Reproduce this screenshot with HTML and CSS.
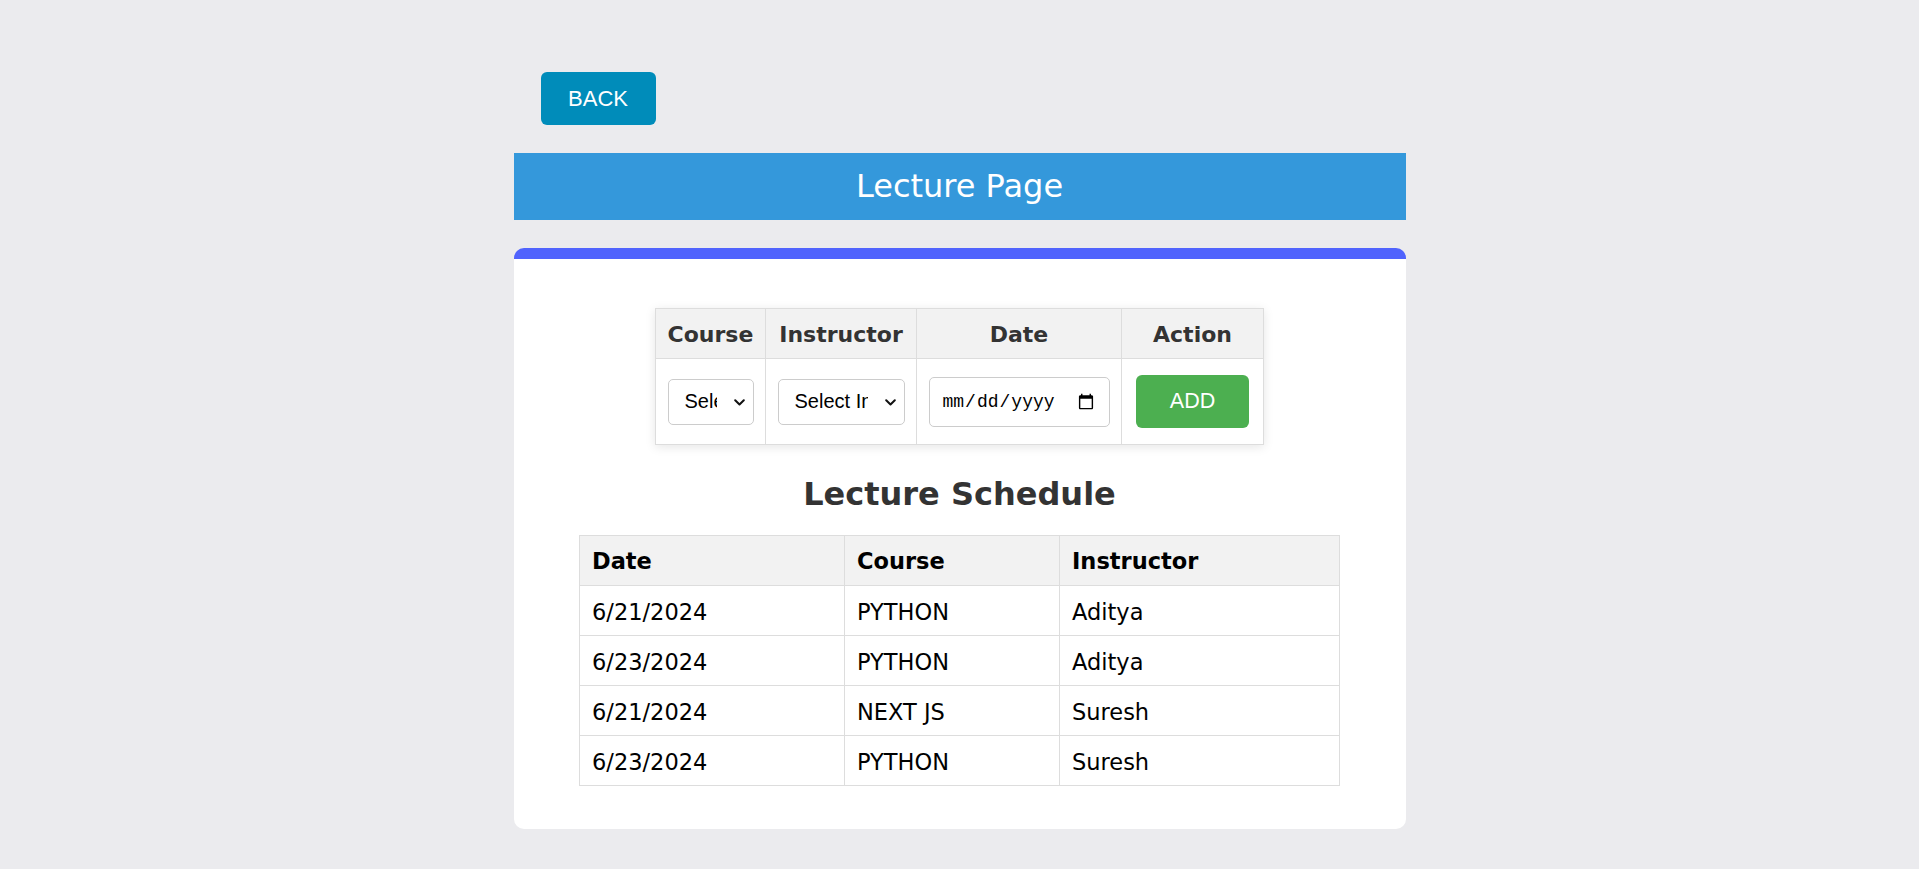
FILE: index.html
```html
<!DOCTYPE html>
<html lang="en">
<head>
<meta charset="utf-8">
<title>Lecture Page</title>
<link rel="stylesheet" href="styles.css">
</head>
<body>
<div class="page">
  <div class="top-bar">
    <button class="btn btn-back" type="button">BACK</button>
  </div>
  <h1 class="title">Lecture Page</h1>
  <div class="card">
    <table class="form-table">
      <colgroup>
        <col class="c1"><col class="c2"><col class="c3"><col class="c4">
      </colgroup>
      <thead>
        <tr><th>Course</th><th>Instructor</th><th>Date</th><th>Action</th></tr>
      </thead>
      <tbody>
        <tr>
          <td>
            <span class="select-wrap">
              <select class="field sel-course"><option>Select Course</option></select>
              <svg class="chev" width="11" height="7" viewBox="0 0 11 7"><path d="M1.2 1.2 L5.5 5.5 L9.8 1.2" fill="none" stroke="#111" stroke-width="2" stroke-linecap="round" stroke-linejoin="round"/></svg>
            </span>
          </td>
          <td>
            <span class="select-wrap">
              <select class="field sel-instr"><option>Select Instructor</option></select>
              <svg class="chev" width="11" height="7" viewBox="0 0 11 7"><path d="M1.2 1.2 L5.5 5.5 L9.8 1.2" fill="none" stroke="#111" stroke-width="2" stroke-linecap="round" stroke-linejoin="round"/></svg>
            </span>
          </td>
          <td><input class="field date" type="date"></td>
          <td><button class="btn btn-add" type="button">ADD</button></td>
        </tr>
      </tbody>
    </table>

    <h2 class="subtitle">Lecture Schedule</h2>

    <table class="schedule">
      <colgroup>
        <col class="s1"><col class="s2"><col class="s3">
      </colgroup>
      <thead>
        <tr><th>Date</th><th>Course</th><th>Instructor</th></tr>
      </thead>
      <tbody>
        <tr><td>6/21/2024</td><td>PYTHON</td><td>Aditya</td></tr>
        <tr><td>6/23/2024</td><td>PYTHON</td><td>Aditya</td></tr>
        <tr><td>6/21/2024</td><td>NEXT JS</td><td>Suresh</td></tr>
        <tr><td>6/23/2024</td><td>PYTHON</td><td>Suresh</td></tr>
      </tbody>
    </table>
  </div>
</div>
</body>
</html>
```

FILE: styles.css
```css
* { box-sizing: border-box; }

html, body {
  margin: 0;
  padding: 0;
}

body {
  background: #ebebee;
  font-family: "DejaVu Sans", Verdana, sans-serif;
  color: #333;
}

.page {
  width: 892px;
  margin: 0 auto;
  padding-top: 72px;
  padding-bottom: 30px;
}

.top-bar {
  padding-left: 27px;
}

.btn {
  font-family: "Liberation Sans", Arial, sans-serif;
  font-size: 22px;
  color: #fff;
  border: none;
  border-radius: 6px;
  cursor: pointer;
  line-height: 25px;
}

.btn-back {
  background: #008cba;
  width: 115px;
  height: 53px;
  padding: 0;
}

.title {
  margin: 28px 0 0;
  background: #3498db;
  color: #fff;
  font-weight: normal;
  font-size: 32px;
  line-height: 37px;
  padding: 15px 0;
  text-align: center;
}

.card {
  margin-top: 28px;
  background: #fff;
  border-top: 11px solid #5063fd;
  border-radius: 10px;
  padding: 49px 0 43px;
}

.form-table {
  width: 608px;
  margin: 0 auto;
  table-layout: fixed;
  border-collapse: collapse;
  box-shadow: 0 2px 10px rgba(0, 0, 0, 0.1);
}

.form-table .c1 { width: 110px; }
.form-table .c2 { width: 151px; }
.form-table .c3 { width: 205px; }
.form-table .c4 { width: 142px; }

.form-table th,
.form-table td {
  border: 1px solid #ddd;
  text-align: center;
}

.form-table th {
  background: #f2f2f2;
  color: #333;
  font-size: 22px;
  line-height: 25px;
  padding: 13px 0 11px;
}

.form-table td {
  padding: 16px 0;
  vertical-align: middle;
  line-height: 0;
}

.field {
  vertical-align: middle;
  background: #fff;
  border: 1px solid #ccc;
  border-radius: 5px;
  color: #000;
}

.select-wrap {
  position: relative;
  display: inline-block;
  vertical-align: middle;
  line-height: 0;
}

select.field {
  -webkit-appearance: none;
  appearance: none;
  font-family: "Liberation Sans", Arial, sans-serif;
  font-size: 20px;
  line-height: 23px;
  height: 46px;
  padding: 0 36px 0 16px;
  overflow: hidden;
}

.chev {
  position: absolute;
  right: 9px;
  top: 20px;
  pointer-events: none;
}

.sel-course { width: 86px; }
.sel-instr { width: 127px; }

.date {
  width: 181px;
  height: 50px;
  padding: 0 12px;
  font-family: "Liberation Mono", monospace;
  font-size: 18px;
}

.btn-add {
  background: #4caf50;
  width: 113px;
  height: 53px;
  padding: 0;
  vertical-align: middle;
  font-size: 21.5px;
}

.subtitle {
  margin: 31px 0 22px;
  text-align: center;
  font-size: 32px;
  line-height: 37px;
  font-weight: bold;
  color: #333;
}

.schedule {
  width: 760px;
  margin: 0 auto;
  table-layout: fixed;
  border-collapse: collapse;
}

.schedule .s1 { width: 265px; }
.schedule .s2 { width: 215px; }
.schedule .s3 { width: 280px; }

.schedule th,
.schedule td {
  border: 1px solid #ddd;
  text-align: left;
  font-size: 22.5px;
  line-height: 25px;
  color: #000;
}

.schedule th {
  background: #f2f2f2;
  font-weight: bold;
  padding: 13px 12px 11px;
}

.schedule td {
  padding: 14px 12px 10px;
}
```
